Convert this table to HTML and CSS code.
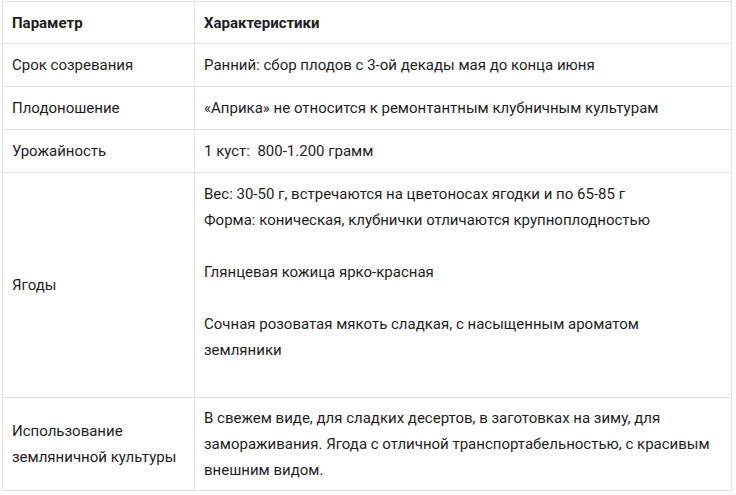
FILE: index.html
```html
<!DOCTYPE html>
<html lang="ru">
<head>
<meta charset="utf-8">
<link rel="stylesheet" href="styles.css">
</head>
<body>
<div class="wrap">
<table class="spec">
  <thead>
    <tr><th class="c1">Параметр</th><th>Характеристики</th></tr>
  </thead>
  <tbody>
    <tr><td class="c1">Срок созревания</td><td>Ранний: сбор плодов с 3-ой декады мая до конца июня</td></tr>
    <tr><td class="c1">Плодоношение</td><td>«Априка» не относится к ремонтантным клубничным культурам</td></tr>
    <tr><td class="c1">Урожайность</td><td>1 куст:&nbsp; 800-1.200 грамм</td></tr>
    <tr><td class="c1">Ягоды</td><td>Вес: 30-50 г, встречаются на цветоносах ягодки и по 65-85 г<br>Форма: коническая, клубнички отличаются крупноплодностью<br><br>Глянцевая кожица ярко-красная<br><br>Сочная розоватая мякоть сладкая, с насыщенным ароматом<br>земляники<br><br></td></tr>
    <tr class="last"><td class="c1">Использование земляничной культуры</td><td>В свежем виде, для сладких десертов, в заготовках на зиму, для замораживания. Ягода с отличной транспортабельностью, с красивым внешним видом.</td></tr>
  </tbody>
</table>
</div>
</body>
</html>
```
FILE: styles.css
```css
html, body {
  margin: 0;
  padding: 0;
  background: #fff;
}
.wrap {
  padding: 1px 4px 0 2px;
}
.spec {
  width: 730px;
  border-collapse: collapse;
  font-family: Roboto, "Liberation Sans", sans-serif;
  font-size: 15px;
  line-height: 26px;
  color: #1e1e1e;
  table-layout: fixed;
}
.spec th, .spec td {
  border: 1px solid #e1e1e7;
  padding: 8px 9px;
  text-align: left;
  vertical-align: middle;
}
.spec th {
  font-weight: 700;
  padding-top: 8px;
  padding-bottom: 7px;
}
.spec .c1 {
  width: 173px;
}
.spec .last td {
  padding-top: 7px;
  padding-bottom: 7px;
}
```
